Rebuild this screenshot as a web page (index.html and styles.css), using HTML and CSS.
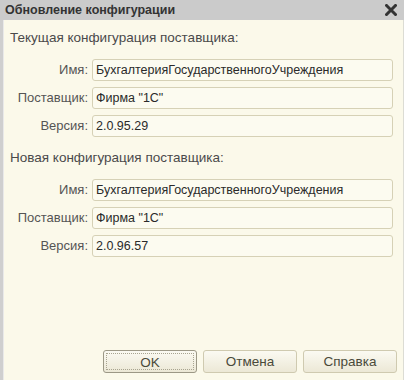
FILE: index.html
```html
<!DOCTYPE html>
<html lang="ru">
  <head>
    <meta charset="UTF-8" />
    <title>Обновление конфигурации</title>
    <link rel="stylesheet" href="styles.css">
  </head>
  <body>
    <div class="window">
      <div class="titlebar">
        <span class="title">Обновление конфигурации</span>
        <svg class="close" width="12" height="12" viewBox="0 0 12 12">
          <path d="M1.5 1.5 L10.5 10.5 M10.5 1.5 L1.5 10.5" stroke="#333" stroke-width="3" stroke-linecap="square" />
        </svg>
      </div>
      <div class="content">
        <p class="group-label">Текущая конфигурация поставщика:</p>
        <div class="fields">
          <label>Имя:</label>
          <div class="field">БухгалтерияГосударственногоУчреждения</div>
          <label>Поставщик:</label>
          <div class="field">Фирма "1С"</div>
          <label>Версия:</label>
          <div class="field">2.0.95.29</div>
        </div>
        <p class="group-label">Новая конфигурация поставщика:</p>
        <div class="fields">
          <label>Имя:</label>
          <div class="field">БухгалтерияГосударственногоУчреждения</div>
          <label>Поставщик:</label>
          <div class="field">Фирма "1С"</div>
          <label>Версия:</label>
          <div class="field">2.0.96.57</div>
        </div>
        <div class="buttons">
          <button class="default"><span>OK</span></button>
          <button>Отмена</button>
          <button>Справка</button>
        </div>
      </div>
    </div>
  </body>
</html>
```

FILE: styles.css
```css
html,
body {
  margin: 0;
  height: 100%;
}
body {
  font-family: "Liberation Sans", Arial, sans-serif;
  background-color: #fbf9ea;
}
.window {
  height: 380px;
  display: flex;
  flex-direction: column;
  border-left: 3px solid #cfcfcf;
  border-right: 1px solid #dcdcd4;
  box-sizing: border-box;
  box-shadow: inset 1px 0 0 #e9e9e9;
}
.titlebar {
  height: 20px;
  background-color: #cbcbcb;
  display: flex;
  align-items: center;
  justify-content: space-between;
  padding: 0 7px 0 5px;
  margin-left: -3px;
  margin-right: -1px;
}
.title {
  font-size: 12.5px;
  font-weight: bold;
  color: #333;
}
.close {
  display: block;
}
.content {
  flex: 1;
  display: flex;
  flex-direction: column;
  padding: 10px 10px 7px 7px;
}
.group-label {
  margin: 0 0 13px;
  font-size: 13.5px;
  line-height: 16px;
  color: #4a4a4a;
}
.fields {
  display: grid;
  grid-template-columns: 78px 1fr;
  column-gap: 4px;
  row-gap: 6px;
  margin-bottom: 13px;
}
.fields label {
  text-align: right;
  font-size: 13px;
  line-height: 22px;
  color: #555;
}
.field {
  height: 22px;
  box-sizing: border-box;
  border: 1px solid #d6d1b6;
  border-radius: 3px;
  background-color: #fcfbf0;
  padding: 0 3px;
  font-size: 12.5px;
  line-height: 20px;
  color: #2a2a2a;
  white-space: nowrap;
  overflow: hidden;
}
.buttons {
  margin-top: auto;
  display: flex;
  justify-content: flex-end;
  gap: 6px;
  margin-right: -4px;
}
button {
  width: 94px;
  height: 23px;
  padding: 0;
  font-family: inherit;
  font-size: 13.5px;
  color: #4a4a3a;
  border: 1px solid #cfcab0;
  border-radius: 3px;
  background: linear-gradient(#fbfaf2, #ece8d6);
  cursor: pointer;
}
button.default {
  border-color: #9c9886;
  padding: 2px;
}
button.default span {
  display: block;
  height: 100%;
  line-height: 17px;
  border: 1px dotted #a8a490;
  box-sizing: border-box;
}
```
